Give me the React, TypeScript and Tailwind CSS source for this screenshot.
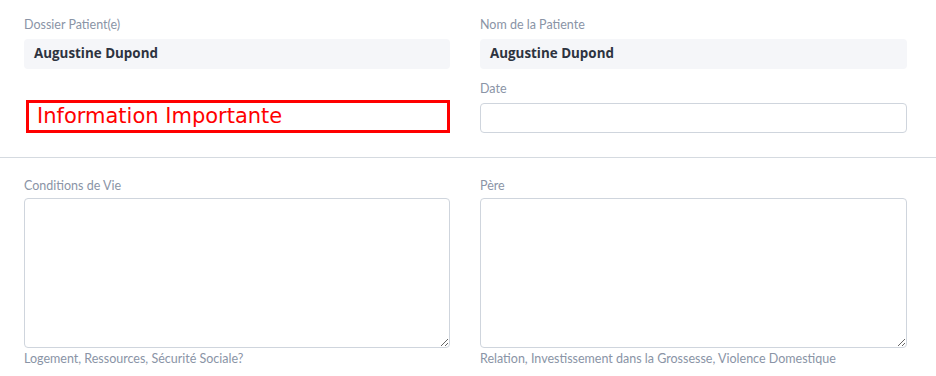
const labelCls = "block text-[12.5px] leading-4 text-[#8a94a6] font-['Lato',sans-serif]";

function Field({ label, children }: { label: string; children: React.ReactNode }) {
  return (
    <div className="flex flex-col">
      <label className={labelCls}>{label}</label>
      {children}
    </div>
  );
}

function ReadOnly({ value }: { value: string }) {
  return (
    <div className="mt-[6px] flex h-[30px] items-center rounded bg-[#f5f6f9] px-[10px] pb-px text-[13.4px] font-bold text-[#2d3340] font-['Open_Sans',sans-serif]">
      {value}
    </div>
  );
}

function TextBlock({ label, hint }: { label: string; hint: string }) {
  return (
    <Field label={label}>
      <textarea className="mt-[4px] h-[150px] w-full rounded border border-[#cfd5dd] bg-white" />
      <p className="mt-[3px] text-[12.5px] leading-4 text-[#8a94a6] font-['Lato',sans-serif]">{hint}</p>
    </Field>
  );
}

export default function App() {
  return (
    <div className="h-[376px] w-[936px] overflow-hidden bg-white">
      <div className="grid grid-cols-[426px_427px] gap-x-[30px] pl-6 pt-[17px]">
        <div className="flex flex-col">
          <Field label="Dossier Patient(e)">
            <ReadOnly value="Augustine Dupond" />
          </Field>
          <div className="ml-[2px] mt-[31px] flex h-[33px] items-center border-[3px] border-[#ff0000] pl-[8px] pt-px text-[21px] text-[#ff0000] font-['DejaVu_Sans',sans-serif]">
            Information Importante
          </div>
        </div>
        <div className="flex flex-col">
          <Field label="Nom de la Patiente">
            <ReadOnly value="Augustine Dupond" />
          </Field>
          <div className="mt-[12px]">
            <Field label="Date">
              <input className="mt-[6px] h-[30px] w-full rounded border border-[#cfd5dd] bg-white" />
            </Field>
          </div>
        </div>
      </div>
      <div className="mt-[24px] border-t border-[#d5dae0]" />
      <div className="grid grid-cols-[426px_427px] gap-x-[30px] pl-6 pt-[20px]">
        <TextBlock label="Conditions de Vie" hint="Logement, Ressources, Sécurité Sociale?" />
        <TextBlock label="Père" hint="Relation, Investissement dans la Grossesse, Violence Domestique" />
      </div>
    </div>
  );
}
